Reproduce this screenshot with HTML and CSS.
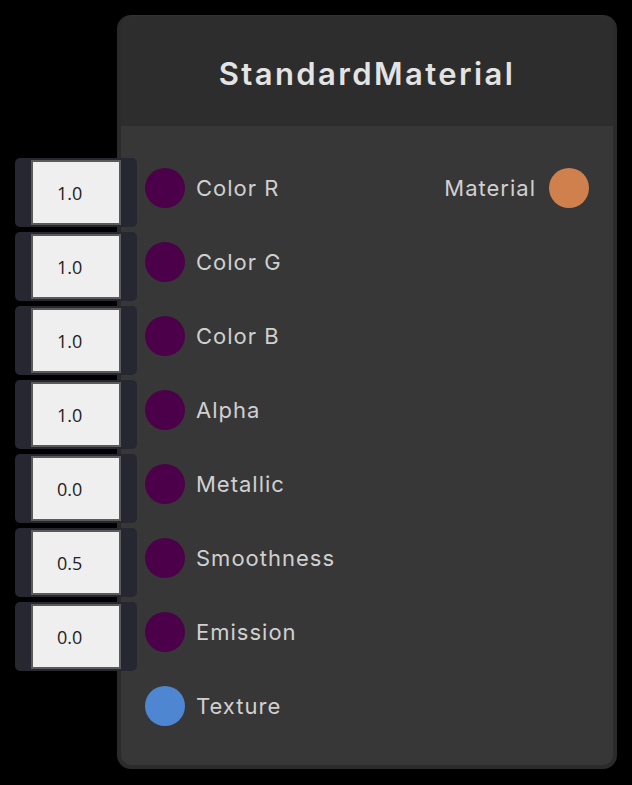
FILE: index.html
```html
<!DOCTYPE html>
<html>
<head>
<meta charset="utf-8">
<link rel="stylesheet" href="styles.css">
</head>
<body>
<div class="canvas">
  <div class="node">
    <div class="node-header">StandardMaterial</div>
    <div class="node-body">
      <div class="row">
        <div class="field"><div class="field-input">1.0</div></div>
        <span class="socket socket-float"></span><span class="label">Color R</span>
        <span class="out"><span class="label">Material</span><span class="socket socket-material"></span></span>
      </div>
      <div class="row">
        <div class="field"><div class="field-input">1.0</div></div>
        <span class="socket socket-float"></span><span class="label">Color G</span>
      </div>
      <div class="row">
        <div class="field"><div class="field-input">1.0</div></div>
        <span class="socket socket-float"></span><span class="label">Color B</span>
      </div>
      <div class="row">
        <div class="field"><div class="field-input">1.0</div></div>
        <span class="socket socket-float"></span><span class="label">Alpha</span>
      </div>
      <div class="row">
        <div class="field"><div class="field-input">0.0</div></div>
        <span class="socket socket-float"></span><span class="label">Metallic</span>
      </div>
      <div class="row">
        <div class="field"><div class="field-input">0.5</div></div>
        <span class="socket socket-float"></span><span class="label">Smoothness</span>
      </div>
      <div class="row">
        <div class="field"><div class="field-input">0.0</div></div>
        <span class="socket socket-float"></span><span class="label">Emission</span>
      </div>
      <div class="row">
        <span class="socket socket-texture"></span><span class="label">Texture</span>
      </div>
    </div>
  </div>
</div>
</body>
</html>
```
FILE: styles.css
```css
html, body {
  margin: 0;
  padding: 0;
  background: #000;
}
.canvas {
  width: 632px;
  height: 785px;
  padding: 15px 15px 16px 117px;
  box-sizing: border-box;
  font-family: Inter, "Noto Sans", sans-serif;
}
.node {
  width: 500px;
  height: 754px;
  box-sizing: border-box;
  border: 4px solid #2b2b2b;
  border-top-width: 0;
  border-radius: 14px;
  background: #2d2d2d;
  display: flex;
  flex-direction: column;
}
.node-header {
  height: 111px;
  flex: none;
  display: flex;
  align-items: center;
  justify-content: center;
  padding: 4px 0 0 0;
  box-sizing: border-box;
  color: #e3e3e3;
  font-size: 31px;
  font-weight: 600;
  letter-spacing: 2.4px;
  border-top: 1px solid #333;
  border-radius: 13px 13px 0 0;
}
.node-body {
  flex: 1;
  background: #373737;
  border-radius: 0 0 10px 10px;
  padding: 25px 24px 0 24px;
  display: flex;
  flex-direction: column;
}
.row {
  position: relative;
  height: 74px;
  display: flex;
  align-items: center;
}
.socket {
  width: 40px;
  height: 40px;
  border-radius: 50%;
  flex: none;
}
.socket-float { background: #4b0049; }
.socket-texture { background: #4f86d1; }
.socket-material { background: #cf804c; }
.label {
  color: #d0d0d0;
  font-size: 22px;
  letter-spacing: 1px;
  margin-left: 11px;
}
.out {
  margin-left: auto;
  display: flex;
  align-items: center;
}
.out .label {
  margin-left: 0;
  margin-right: 13px;
}
.field {
  position: absolute;
  left: -130px;
  top: 7px;
  width: 122px;
  height: 69px;
  box-sizing: border-box;
  background: #262730;
  border-radius: 5px;
  padding: 2px 16px;
}
.field-input {
  height: 65px;
  box-sizing: border-box;
  border: 2px solid #5a5a5a;
  background: #efefef;
  color: #222;
  font-family: "Open Sans", "DejaVu Sans", sans-serif;
  font-size: 18px;
  display: flex;
  align-items: center;
  padding-left: 24px;
}
```
